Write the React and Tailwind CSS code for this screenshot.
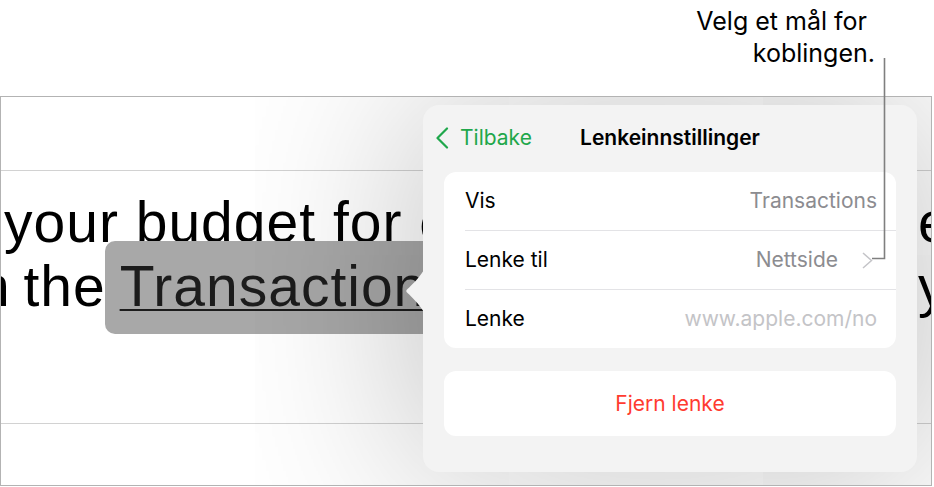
function Row({ label, value, muted, chevron, last }) {
  return (
    <div className={"ml-[21px] pr-[19px] h-[58px] flex items-center justify-between " + (last ? "" : "border-b border-[#e3e3e6] box-content")}>
      <span className="text-[21px] text-black">{label}</span>
      <span className={"flex items-center text-[21px] " + (muted ? "text-[#c4c4c7]" : "text-[#8c8c90]")}>
        {value}
        {chevron && (
          <svg className="ml-[24px] mr-[4px]" width="11" height="17" viewBox="0 0 11 17">
            <path d="M1 1 L9.5 8.5 L1 16" fill="none" stroke="#c4c4c8" strokeWidth="1.5" />
          </svg>
        )}
      </span>
    </div>
  );
}

function LinkPopover() {
  return (
    <div className="absolute left-[422px] top-[8px] w-[494px] h-[367px] rounded-[16px] bg-[#f3f3f3] shadow-[0_0_200px_rgba(0,0,0,0.28)] font-['Inter',sans-serif]">
      <svg className="absolute left-[-18px] top-[165px]" width="19" height="42" viewBox="0 0 19 42">
        <path d="M19 0 C13 9 7 15 2.5 19 Q0 21 2.5 23 C7 27 13 33 19 42 Z" fill="#f3f3f3" />
      </svg>
      <div className="h-[67px] grid grid-cols-[1fr_auto_1fr] items-center pb-[1px]">
        <div className="flex items-center pl-[12px] text-[#1fa74b]">
          <svg width="14" height="22" viewBox="0 0 14 22">
            <path d="M12 1.5 L2.5 11 L12 20.5" fill="none" stroke="#1fa74b" strokeWidth="2.2" strokeLinecap="round" strokeLinejoin="round" />
          </svg>
          <span className="ml-[11px] text-[21px]">Tilbake</span>
        </div>
        <div className="text-[21px] font-semibold text-black">Lenkeinnstillinger</div>
        <div />
      </div>
      <div className="mx-[21px] bg-white rounded-[12px]">
        <Row label="Vis" value="Transactions" />
        <Row label="Lenke til" value="Nettside" chevron />
        <Row label="Lenke" value="www.apple.com/no" muted last />
      </div>
      <div className="mx-[21px] mt-[23px] h-[65px] bg-white rounded-[12px] flex items-center justify-center text-[21px] text-[#ff3b30]">
        Fjern lenke
      </div>
    </div>
  );
}

export default function App() {
  return (
    <div className="relative w-[934px] h-[487px] bg-white overflow-hidden">
      <div className="h-[96px] pt-[5px] text-[25px] leading-[32px] text-black font-['Inter',sans-serif]">
        <p className="text-right pr-[67px]">Velg et mål for</p>
        <p className="text-right pr-[59px]">koblingen.</p>
      </div>

      <div className="relative w-[932px] h-[390px] border border-[#b3b3b3] overflow-hidden flex flex-col">
        <div className="h-[74px] border-b border-[#d2d2d2]" />
        <div className="flex-1 pt-[19px] text-[57px] leading-[64px] tracking-[1px] text-black font-['Liberation_Sans',sans-serif] whitespace-nowrap">
          <div className="grid grid-cols-[917px_1fr]">
            <div className="overflow-hidden pl-[3px]">your budget for each</div>
            <div>each</div>
          </div>
          <div className="grid grid-cols-[917px_1fr]">
            <div className="ml-[-23px] [word-spacing:-4px]">
              n the{" "}
              <span className="rounded-[10px] bg-[#a8a8a8] pt-[13px] pb-[16px] pl-[15px] pr-[40px] ml-[-14px] text-[#1c1c1c] underline decoration-2 underline-offset-[3px]">Transactions</span>
            </div>
            <div>y</div>
          </div>
        </div>
        <div className="h-[62px] border-t border-[#d2d2d2]" />
        <LinkPopover />
      </div>

      <svg className="absolute left-0 top-0 pointer-events-none" width="934" height="487">
        <path d="M884.5 58 V258.5 H872" fill="none" stroke="#7f7f7f" strokeWidth="1.6" />
      </svg>
    </div>
  );
}
